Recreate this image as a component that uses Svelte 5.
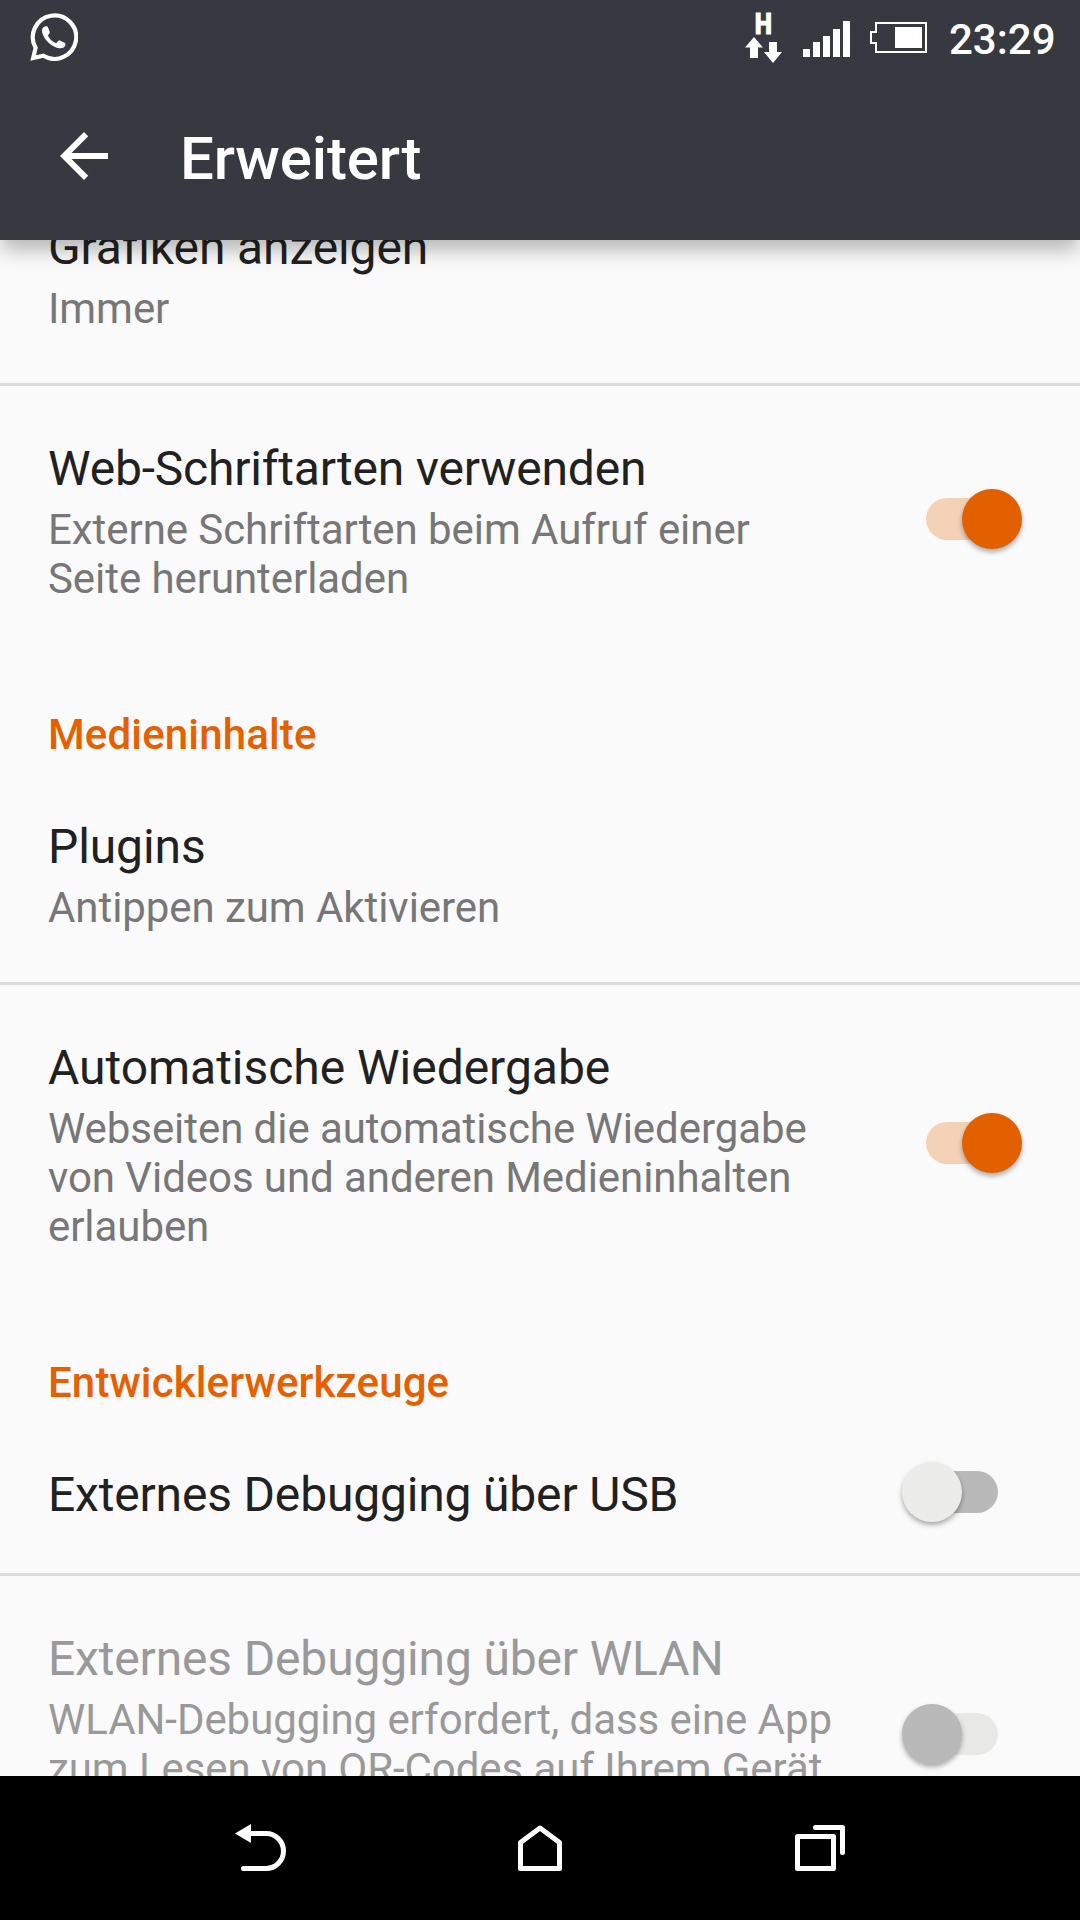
<script>
  // spacing holds the tracking of a title in pixels
  const rows = [
    { title: 'Grafiken anzeigen', spacing: -0.13, lines: ['Immer'], divider: true },
    {
      title: 'Web-Schriftarten verwenden',
      spacing: -0.19,
      lines: ['Externe Schriftarten beim Aufruf einer', 'Seite herunterladen'],
      toggle: 'on'
    },
    { section: 'Medieninhalte' },
    { title: 'Plugins', spacing: -0.1, lines: ['Antippen zum Aktivieren'], divider: true },
    {
      title: 'Automatische Wiedergabe',
      spacing: -0.03,
      lines: ['Webseiten die automatische Wiedergabe', 'von Videos und anderen Medieninhalten', 'erlauben'],
      toggle: 'on'
    },
    { section: 'Entwicklerwerkzeuge' },
    { title: 'Externes Debugging über USB', spacing: -0.18, lines: [], toggle: 'off', divider: true },
    {
      title: 'Externes Debugging über WLAN',
      spacing: -0.16,
      lines: ['WLAN-Debugging erfordert, dass eine App', 'zum Lesen von QR-Codes auf Ihrem Gerät'],
      toggle: 'disabled',
      tall: true
    }
  ];
</script>

<div class="screen">
  <header>
    <div class="status">
      <svg class="chat" width="48" height="48" viewBox="0 0 48 48">
        <path d="M5.6 34.8A21.7 21.7 0 1 1 13.4 42.8L3.2 45Z" fill="none" stroke="#fff" stroke-width="4.2" />
        <path d="M12 18C11.8 15.5 13.5 13.6 15 13.4C16.5 13.2 17.4 13.2 18 14.5L19.8 19C20.1 20.4 18.2 21.6 18 22.6C19 25.5 22.5 29 26 30.3C27 30.3 28 27.6 29.5 27.3L35 30C36 31 35.2 33.5 33.6 34.6C31 36 28 35.2 25.5 34.2C19 31.5 12.8 25 12 18Z" fill="#fff" />
      </svg>
      <!-- mobile data, signal strength and battery -->
      <svg class="indicators" width="184" height="72" viewBox="0 0 184 72" fill="#fff">
        <text x="9.8" y="33.6" font-size="29" font-weight="900" textLength="17.2" lengthAdjust="spacingAndGlyphs" stroke="#fff" stroke-width="0.8">H</text>
        <path d="M9 37L18 47.5H13V58H5V47.5H0Z" />
        <path d="M24 42H32V52H37L28 63L19 52H24Z" />
        <path d="M58 49h7v8h-7zM68 42h7v15h-7zM78 36h7v21h-7zM88 29h7v28h-7zM98 21h7v36h-7z" />
        <path d="M131 23H181V52H131V43H126V32H131Z" fill="none" stroke="#fff" stroke-width="2" />
        <path d="M150 27h27v21h-27z" />
      </svg>
      <span class="clock">23:29</span>
    </div>
    <div class="bar">
      <svg width="72" height="72" viewBox="0 0 24 24"><path fill="#fff" d="M20 11H7.83l5.59-5.59L12 4l-8 8 8 8 1.41-1.41L7.83 13H20v-2z" /></svg>
      <h1>Erweitert</h1>
    </div>
  </header>

  <main>
    {#each rows as row}
      {#if row.section}
        <h2>{row.section}</h2>
      {:else}
        <div class="row" class:divider={row.divider} class:tall={row.tall} class:muted={row.toggle === 'disabled'}>
          <div class="text">
            <div class="title" style:letter-spacing="{row.spacing}px">{row.title}</div>
            {#if row.lines.length}
              <div class="summary">
                {#each row.lines as line}<div>{line}</div>{/each}
              </div>
            {/if}
          </div>
          {#if row.toggle}
            <div class="switch {row.toggle}">
              <div class="track"></div>
              <div class="thumb"></div>
            </div>
          {/if}
        </div>
      {/if}
    {/each}
  </main>

  <nav>
    <svg width="280" height="144" viewBox="0 0 280 144">
      <path d="M115 57.5L131 48V67Z" fill="#fff" />
      <path d="M129 57.5H146a17.5 17.5 0 0 1 0 35H123.5" />
    </svg>
    <svg width="280" height="144" viewBox="0 0 280 144">
      <path d="M140 52L159.5 66.5V92.5H120.5V66.5Z" />
    </svg>
    <svg width="280" height="144" viewBox="0 0 280 144">
      <path d="M117.5 60.5h36v32h-36zM135.5 51.5H162.5V76.5" />
    </svg>
  </nav>
</div>

<style>
  :global(body) { margin: 0; background: #fafafa; }
  .screen {
    width: 1080px;
    height: 1920px;
    display: flex;
    flex-direction: column;
    overflow: hidden;
    background: #fafafa;
    font-family: Roboto, "Liberation Sans", sans-serif;
    color: #212121;
  }
  header {
    position: relative;
    z-index: 1;
    flex: none;
    height: 240px;
    background: #373940;
    color: #fff;
    box-shadow: 0 12px 18px -2px rgba(0, 0, 0, 0.27);
  }
  .status {
    display: flex;
    height: 72px;
    padding-left: 30px;
  }
  .chat { margin-top: 13px; }
  .indicators { margin-left: 667px; }
  .clock {
    margin-left: 20px;
    padding-top: 15px;
    font-size: 42px;
    line-height: 49px;
    font-weight: 500;
  }
  .bar {
    display: flex;
    align-items: center;
    height: 168px;
    padding-left: 48px;
  }
  h1 {
    margin: 6px 0 0 60px;
    font-size: 60px;
    line-height: 70px;
    font-weight: 500;
    letter-spacing: -0.12px;
  }
  main {
    flex: 1;
    min-height: 0;
    overflow: hidden;
  }
  .row {
    display: flex;
    align-items: center;
    justify-content: space-between;
    box-sizing: border-box;
    padding: 0 58px 0 48px;
  }
  .row:first-child { margin-top: -75px; }
  .divider { border-bottom: 3px solid #dcdcdc; }
  .tall { height: 316px; }
  .text { align-self: flex-start; padding: 54px 0 50px; white-space: nowrap; }
  .title { font-size: 48px; line-height: 57px; }
  .summary {
    margin-top: 8px;
    font-size: 42px;
    line-height: 49px;
    letter-spacing: -0.065px;
    color: #777;
  }
  .muted .title, .muted .summary { color: #999; }
  h2 {
    margin: 0;
    padding: 57px 48px 5px;
    font-size: 42px;
    line-height: 49px;
    font-weight: 500;
    letter-spacing: 0.14px;
    color: #e66000;
  }
  .switch {
    display: grid;
    align-items: center;
    width: 120px;
    height: 60px;
    margin-bottom: 1px;
  }
  .track, .thumb { grid-area: 1 / 1; }
  .track {
    width: 72px;
    height: 42px;
    margin-left: 24px;
    border-radius: 21px;
    background: #b9b9b9;
  }
  .thumb {
    width: 60px;
    height: 60px;
    border-radius: 50%;
    background: #ececea;
    box-shadow: 0 3px 5px rgba(0, 0, 0, 0.32);
  }
  .on .track { background: #f4d2b8; }
  .on .thumb { justify-self: end; background: #e26000; }
  .disabled .track { background: #e8e8e6; }
  .disabled .thumb { background: #b9b9b9; }
  nav {
    flex: none;
    display: flex;
    justify-content: center;
    height: 144px;
    background: #000;
  }
  nav path {
    fill: none;
    stroke: #fff;
    stroke-width: 5;
    stroke-linecap: round;
    stroke-linejoin: round;
  }
  nav path[fill] { fill: #fff; stroke: none; }
</style>
